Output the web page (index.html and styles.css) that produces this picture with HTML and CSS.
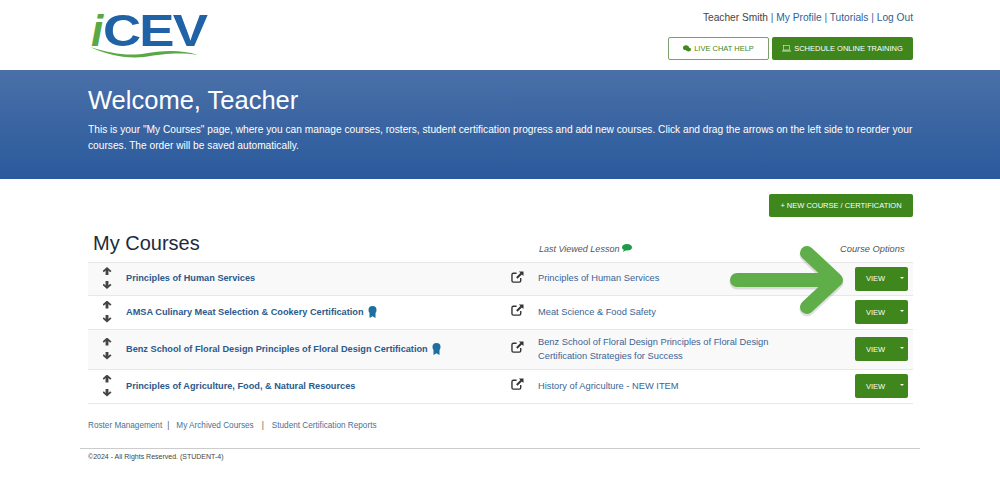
FILE: index.html
```html
<!DOCTYPE html>
<html lang="en">
  <head>
    <meta charset="UTF-8" />
    <title>My Courses</title>
    <link rel="stylesheet" href="styles.css">
  </head>
  <body>
    <!-- Header -->
    <header class="top-bar">
      <a class="logo" href="#">
        <span class="logo-i">i</span><span class="logo-cev">CEV</span>
        <svg class="logo-swoosh" width="112" height="14" viewBox="0 0 112 14">
          <path d="M0 1C20 7 34 10 52 8C72 5 88 3 108 9C88 6 74 8 54 11C34 13 16 8 0 1Z" fill="#5aa845" />
        </svg>
      </a>
      <div class="top-right">
        <p class="user-links">
          <span class="user-name">Teacher Smith</span> |
          <a href="#">My Profile</a> | <a href="#">Tutorials</a> |
          <a href="#">Log Out</a>
        </p>
        <div class="top-buttons">
          <a class="button button-outline chat-button" href="#">
            <svg width="8" height="7" viewBox="0 0 16 14"><ellipse cx="6" cy="5.500" rx="6" ry="5" fill="#3f8a1d" /><ellipse cx="11" cy="9" rx="5" ry="4" fill="#3f8a1d" /></svg>
            LIVE CHAT HELP
          </a>
          <a class="button training-button" href="#">
            <svg width="9" height="7" viewBox="0 0 18 14"><rect x="3" y="1" width="12" height="9" fill="none" stroke="#fff" stroke-width="1" /><path d="M0 12H18" stroke="#fff" stroke-width="1.500" /></svg>
            SCHEDULE ONLINE TRAINING
          </a>
        </div>
      </div>
    </header>

    <!-- Welcome banner -->
    <section class="hero">
      <h1 class="hero-title">Welcome, Teacher</h1>
      <p class="hero-text">
        This is your "My Courses" page, where you can manage courses, rosters, student certification progress and add new courses. Click and drag the arrows on the left side to reorder your courses. The order will be saved automatically.
      </p>
    </section>

    <main class="content">
      <div class="new-course-row">
        <a class="button new-course-button" href="#">+ NEW COURSE / CERTIFICATION</a>
      </div>

      <div class="course-head">
        <h2 class="page-title">My Courses</h2>
        <p class="last-viewed">
          Last Viewed Lesson
          <svg width="10" height="8" viewBox="0 0 20 16"><path d="M10 0C16 0 20 3 20 7C20 11 16 13 10 13C9 13 8 13 7 13L2 16L3.500 11.500C1 10.500 0 9 0 7C0 3 4 0 10 0Z" fill="#1f9a4b" /></svg>
        </p>
        <p class="options-label">Course Options</p>
      </div>

      <!-- Course rows -->
      <div class="course-row row-shaded row-first">
        <div class="move-arrows"><span class="arrow-up"></span><span class="arrow-down"></span></div>
        <a class="course-name" href="#">Principles of Human Services</a>
        <svg class="open-icon" width="13" height="12" viewBox="0 0 14 13"><path d="M6 2.500H2.500Q1 2.500 1 4V10.500Q1 12 2.500 12H9Q10.500 12 10.500 10.500V7.500" fill="none" stroke="#333" stroke-width="1.500" /><path d="M8.500 .5H13.500V5.500L11.700 3.800L7 8.300L5.500 6.800L10.200 2.200Z" fill="#333" /></svg>
        <a class="lesson-name" href="#">Principles of Human Services</a>
        <div class="view-button"><span>VIEW</span><i class="caret"></i></div>
      </div>
      <div class="course-row">
        <div class="move-arrows"><span class="arrow-up"></span><span class="arrow-down"></span></div>
        <a class="course-name" href="#">AMSA Culinary Meat Selection &amp; Cookery Certification
          <svg class="ribbon" width="9" height="12" viewBox="0 0 9 12"><circle cx="4.500" cy="4" r="4" fill="#1d6f9f" /><path d="M1.500 7H7.500V12L4.500 10.300L1.500 12Z" fill="#1d6f9f" /></svg>
        </a>
        <svg class="open-icon" width="13" height="12" viewBox="0 0 14 13"><path d="M6 2.500H2.500Q1 2.500 1 4V10.500Q1 12 2.500 12H9Q10.500 12 10.500 10.500V7.500" fill="none" stroke="#333" stroke-width="1.500" /><path d="M8.500 .5H13.500V5.500L11.700 3.800L7 8.300L5.500 6.800L10.200 2.200Z" fill="#333" /></svg>
        <a class="lesson-name" href="#">Meat Science &amp; Food Safety</a>
        <div class="view-button"><span>VIEW</span><i class="caret"></i></div>
      </div>
      <div class="course-row row-shaded row-tall">
        <div class="move-arrows"><span class="arrow-up"></span><span class="arrow-down"></span></div>
        <a class="course-name" href="#">Benz School of Floral Design Principles of Floral Design Certification
          <svg class="ribbon" width="9" height="12" viewBox="0 0 9 12"><circle cx="4.500" cy="4" r="4" fill="#1d6f9f" /><path d="M1.500 7H7.500V12L4.500 10.300L1.500 12Z" fill="#1d6f9f" /></svg>
        </a>
        <svg class="open-icon" width="13" height="12" viewBox="0 0 14 13"><path d="M6 2.500H2.500Q1 2.500 1 4V10.500Q1 12 2.500 12H9Q10.500 12 10.500 10.500V7.500" fill="none" stroke="#333" stroke-width="1.500" /><path d="M8.500 .5H13.500V5.500L11.700 3.800L7 8.300L5.500 6.800L10.200 2.200Z" fill="#333" /></svg>
        <a class="lesson-name" href="#">Benz School of Floral Design Principles of Floral Design Certification Strategies for Success</a>
        <div class="view-button"><span>VIEW</span><i class="caret"></i></div>
      </div>
      <div class="course-row">
        <div class="move-arrows"><span class="arrow-up"></span><span class="arrow-down"></span></div>
        <a class="course-name" href="#">Principles of Agriculture, Food, &amp; Natural Resources</a>
        <svg class="open-icon" width="13" height="12" viewBox="0 0 14 13"><path d="M6 2.500H2.500Q1 2.500 1 4V10.500Q1 12 2.500 12H9Q10.500 12 10.500 10.500V7.500" fill="none" stroke="#333" stroke-width="1.500" /><path d="M8.500 .5H13.500V5.500L11.700 3.800L7 8.300L5.500 6.800L10.200 2.200Z" fill="#333" /></svg>
        <a class="lesson-name" href="#">History of Agriculture - NEW ITEM</a>
        <div class="view-button"><span>VIEW</span><i class="caret"></i></div>
      </div>

      <p class="footer-links">
        <a href="#">Roster Management</a><span class="sep">|</span><a href="#">My Archived Courses</a><span class="sep sep-wide">|</span><a href="#">Student Certification Reports</a>
      </p>
    </main>

    <footer class="footer">
      <p>©2024 - All Rights Reserved. (STUDENT-4)</p>
    </footer>

    <!-- Green pointer arrow over the first row -->
    <svg class="pointer-arrow" width="130" height="76" viewBox="0 0 130 76">
      <g fill="none" stroke-linecap="round" stroke-linejoin="round">
        <path d="M9 35H106M79 8L108 35L79 62" stroke="#000" stroke-opacity=".12" stroke-width="15" transform="translate(0 2)" />
        <path d="M9 35H106M79 8L108 35L79 62" stroke="#5fae4a" stroke-width="14" />
      </g>
    </svg>
  </body>
</html>
```

FILE: styles.css
```css
* {
  margin: 0;
  padding: 0;
  box-sizing: border-box;
}
body {
  position: relative;
  font-family: "Liberation Sans", Arial, sans-serif;
  color: #333;
  background-color: #fff;
}
a {
  text-decoration: none;
}

/* Header */
.top-bar {
  height: 70px;
  padding: 0 87px 0 88px;
  display: flex;
  justify-content: space-between;
}
.logo {
  position: relative;
  display: block;
  width: 120px;
  height: 56px;
  padding-top: 11px;
  padding-left: 3px;
  line-height: 40px;
  white-space: nowrap;
}
.logo-i {
  font-style: italic;
  font-weight: bold;
  font-size: 44px;
  color: #5aa845;
}
.logo-cev {
  font-weight: bold;
  font-size: 44px;
  letter-spacing: -1.500px;
  color: #1f62a6;
  display: inline-block;
  transform: scaleX(1.2);
  transform-origin: left;
}
.logo-swoosh {
  position: absolute;
  left: 2px;
  top: 46px;
}
.top-right {
  display: flex;
  flex-direction: column;
  align-items: flex-end;
}
.user-links {
  margin-top: 11px;
  font-size: 10.200px;
  line-height: 13px;
  color: #4a6a94;
}
.user-links a {
  color: #2f5f96;
}
.user-name {
  color: #444;
}
.top-buttons {
  display: flex;
  gap: 3px;
  margin-top: 13px;
}
.button {
  display: flex;
  align-items: center;
  justify-content: center;
  gap: 3px;
  background-color: #3f861c;
  color: #fff;
  border-radius: 2px;
  font-size: 7.500px;
}
.button-outline {
  background-color: #fff;
  color: #3f861c;
  border: 1px solid #7d9f6c;
}
.chat-button {
  width: 101px;
  height: 23px;
}
.training-button {
  width: 141px;
  height: 23px;
}

/* Welcome banner */
.hero {
  height: 109px;
  padding: 14px 87px 0 88px;
  background: linear-gradient(#4a70a8, #2a5a9c);
  color: #fff;
}
.hero-title {
  font-size: 25.500px;
  font-weight: normal;
  line-height: 32px;
}
.hero-text {
  margin-top: 6px;
  font-size: 10.200px;
  line-height: 16px;
}

/* Course list */
.content {
  padding: 15px 87px 0 88px;
}
.new-course-row {
  display: flex;
  justify-content: flex-end;
}
.new-course-button {
  width: 144px;
  height: 23px;
  font-size: 7.500px;
}
.course-head {
  display: flex;
  align-items: flex-end;
  height: 45px;
  padding-bottom: 8px;
}
.page-title {
  width: 451px;
  padding-left: 5px;
  margin-bottom: -1px;
  font-size: 20px;
  line-height: 24px;
  font-weight: normal;
  color: #1c2b3c;
}
.last-viewed {
  width: 301px;
  font-size: 9px;
  font-style: italic;
  color: #555;
}
.options-label {
  width: 65px;
  font-size: 9.300px;
  font-style: italic;
  color: #555;
  white-space: nowrap;
}
.course-row {
  display: flex;
  align-items: center;
  height: 34px;
  border-bottom: 1px solid #e8e8e8;
}
.row-first {
  border-top: 1px solid #e8e8e8;
}
.row-tall {
  height: 40px;
}
.row-shaded {
  background-color: #f9f9f9;
}
.move-arrows {
  width: 38px;
  margin-bottom: 2px;
  display: flex;
  flex-direction: column;
  align-items: center;
  gap: 6px;
}
.arrow-up,
.arrow-down {
  width: 9px;
  height: 8px;
  background-color: #444;
}
.arrow-up {
  clip-path: polygon(50% 0, 100% 50%, 85% 65%, 66% 45%, 66% 100%, 34% 100%, 34% 45%, 15% 65%, 0 50%);
}
.arrow-down {
  clip-path: polygon(50% 100%, 100% 50%, 85% 35%, 66% 55%, 66% 0, 34% 0, 34% 55%, 15% 35%, 0 50%);
}
.course-name {
  width: 385px;
  margin-bottom: 2px;
  font-size: 9.200px;
  font-weight: bold;
  color: #2c5a8c;
  display: flex;
  align-items: center;
  gap: 4px;
  white-space: nowrap;
}
.open-icon {
  margin-top: -5px;
  margin-right: 14px;
  flex-shrink: 0;
}
.lesson-name {
  width: 256px;
  padding-right: 12px;
  margin-bottom: 2px;
  font-size: 9.300px;
  line-height: 14px;
  color: #3a6496;
}
.view-button {
  width: 53px;
  height: 24px;
  margin-left: 61px;
  margin-bottom: 1px;
  display: flex;
  align-items: center;
  background-color: #3f861c;
  border-radius: 2px;
  color: #fff;
  font-size: 7.500px;
  position: relative;
  padding-left: 11px;
}
.caret {
  position: absolute;
  right: 4px;
  top: 10px;
  border-top: 2px solid #fff;
  border-left: 2px solid transparent;
  border-right: 2px solid transparent;
}
.footer-links {
  margin-top: 16px;
  font-size: 8.200px;
  line-height: 12px;
}
.footer-links a {
  color: #4a6f97;
}
.sep {
  margin: 0 7px 0 5px;
  color: #555;
}
.sep-wide {
  margin: 0 8px;
}

/* Footer */
.footer {
  margin: 16px 80px 0;
  padding: 3px 8px 0;
  border-top: 1px solid #ccc;
  font-size: 7px;
  line-height: 10px;
  color: #444;
}

/* Pointer */
.pointer-arrow {
  position: absolute;
  left: 728px;
  top: 245px;
}
```
